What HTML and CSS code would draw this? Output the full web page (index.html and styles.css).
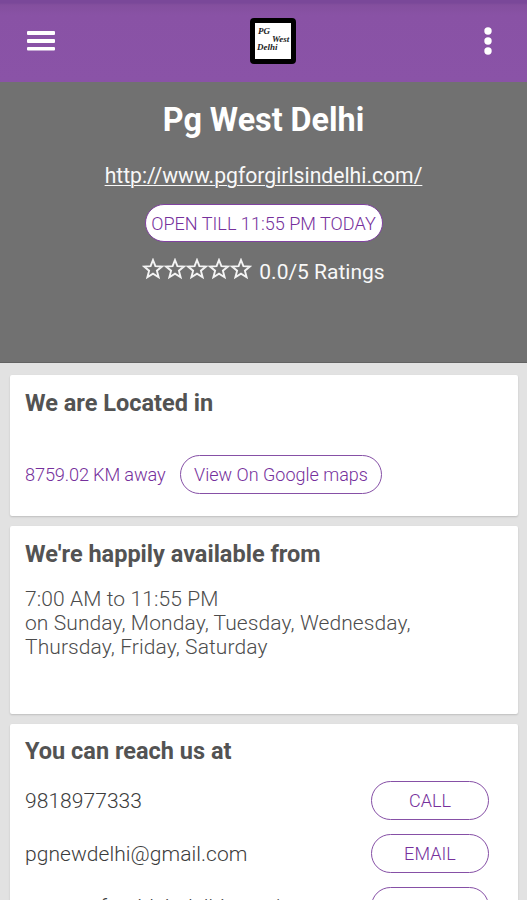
FILE: index.html
```html
<!DOCTYPE html>
<html lang="en">
<head>
<meta charset="utf-8">
<title>Pg West Delhi</title>
<link rel="stylesheet" href="styles.css">
</head>
<body>
<header class="bar">
  <svg class="menu" width="30" height="22" viewBox="0 0 30 22" fill="#fff"><rect x="1" y="1" width="28" height="4" rx="1"/><rect x="1" y="9" width="28" height="4" rx="1"/><rect x="1" y="17" width="28" height="3.5" rx="1"/></svg>
  <div class="logo"><span class="script pg">PG</span><span class="script west">West</span><span class="script delhi">Delhi</span></div>
  <svg class="more" width="8" height="28" viewBox="0 0 8 28" fill="#fff"><circle cx="4" cy="4" r="3.7"/><circle cx="4" cy="14" r="3.7"/><circle cx="4" cy="24" r="3.7"/></svg>
</header>
<section class="hero">
  <h1><span>Pg West Delhi</span></h1>
  <a class="site">http://www.pgforgirlsindelhi.com/</a>
  <div class="open"><span>OPEN TILL 11:55 PM TODAY</span></div>
  <div class="rating">
    <svg width="110" height="22" viewBox="0 0 110 22" fill="none" stroke="#f4f4f4" stroke-width="1.9">
      <defs><path id="star" d="M11 2 13.4 8.1 20 8.5 14.9 12.7 16.6 19.2 11 15.6 5.4 19.2 7.1 12.7 2 8.5 8.6 8.1Z"/></defs>
      <use href="#star"/><use href="#star" x="22"/><use href="#star" x="44"/><use href="#star" x="66"/><use href="#star" x="88"/>
    </svg>
    <span class="score">0.0/5 Ratings</span>
  </div>
</section>
<main class="cards">
  <section class="card location">
    <h2>We are Located in</h2>
    <div class="line"><span class="distance">8759.02 KM away</span><a class="pill map"><span>View On Google maps</span></a></div>
  </section>
  <section class="card hours">
    <h2>We're happily available from</h2>
    <p>7:00 AM to 11:55 PM<br>on Sunday, Monday, Tuesday, Wednesday,<br>Thursday, Friday, Saturday</p>
  </section>
  <section class="card contact">
    <h2>You can reach us at</h2>
    <div class="row"><span class="phone">9818977333</span><a class="pill">CALL</a></div>
    <div class="row"><span class="mail">pgnewdelhi@gmail.com</span><a class="pill">EMAIL</a></div>
    <div class="row"><span class="web">www.pgforgirlsindelhi.com/</span><a class="pill"></a></div>
  </section>
</main>
</body>
</html>
```
FILE: styles.css
```css
* { box-sizing: border-box; }
html, body { height: 900px; overflow: hidden; }
body { margin: 0; width: 527px; background: #e2e2e2; font-family: Roboto, "Liberation Sans", sans-serif; color: #4c4c4c; display: flex; flex-direction: column; }
h1, h2, p { margin: 0; }
.bar { flex: none; height: 82px; background: linear-gradient(#7a4899 0 3px, #844f9e 5px, #8952a5 15px, #8a53a7 100%); display: grid; grid-template-columns: 224px 46px 1fr; align-items: center; padding: 0 35px 0 26px; }
.menu { display: block; }
.more { display: block; justify-self: end; }
.logo { position: relative; width: 46px; height: 46px; border: 5px solid #000; border-radius: 4px; background: #fff; }
.script { position: absolute; font: italic bold 9px/8px "Liberation Serif", serif; color: #222; }
.pg { left: 3px; top: 4px; }
.west { left: 17px; top: 12px; }
.delhi { left: 2px; top: 20px; }
.hero { flex: none; height: 281px; background: #717171; border-bottom: 1px solid #626262; color: #fff; display: flex; flex-direction: column; align-items: center; padding-top: 18px; }
h1 { font-size: 32.3px; line-height: 40px; font-weight: 700; }
.site { margin-top: 23px; font-size: 21.15px; line-height: 26px; text-decoration: underline; text-decoration-thickness: 1px; text-underline-offset: 2px; color: #f8f8f8; }
.open { margin-top: 15px; width: 238px; height: 38px; border: 1px solid #8042a0; border-radius: 19px; background: #fff; color: #76309c; font-size: 18.1px; font-weight: 300; line-height: 37px; text-align: center; white-space: nowrap; }
.rating { margin-top: 16px; display: flex; align-items: center; gap: 7px; height: 28px; font-size: 21px; color: #f8f8f8; }
.rating svg { margin-top: -6px; }
.cards { flex: 1; min-height: 0; overflow: hidden; display: flex; flex-direction: column; gap: 10px; padding: 12px 9px 0 10px; }
.card { flex: none; background: #fff; border-radius: 2px; box-shadow: 0 1px 2px rgba(0,0,0,.16); padding: 14px 15px; }
.location { height: 141px; }
.hours { height: 188px; }
.contact { flex: 0 0 176px; overflow: hidden; padding-top: 13px; border-radius: 2px 2px 0 0; }
h2 { font-size: 23.5px; line-height: 28px; font-weight: 700; color: #535353; }
.line { display: flex; align-items: center; margin-top: 38px; font-size: 18.2px; font-weight: 300; color: #76309c; }
.distance { width: 155px; white-space: nowrap; letter-spacing: -0.15px; }
.pill { width: 118px; height: 39px; border: 1px solid #8650a6; border-radius: 20px; color: #76309c; font-size: 18px; font-weight: 300; line-height: 38px; text-align: center; white-space: nowrap; }
.map { width: 202px; }
.hours p { margin-top: 19px; font-size: 21px; font-weight: 300; line-height: 24px; white-space: nowrap; letter-spacing: 0.1px; }
.contact h2 { margin-bottom: 16px; }
.row { display: flex; align-items: center; justify-content: space-between; height: 39px; margin-bottom: 14px; padding-right: 14px; font-size: 21px; font-weight: 300; color: #3c3c3c; letter-spacing: 0.05px; }
```
